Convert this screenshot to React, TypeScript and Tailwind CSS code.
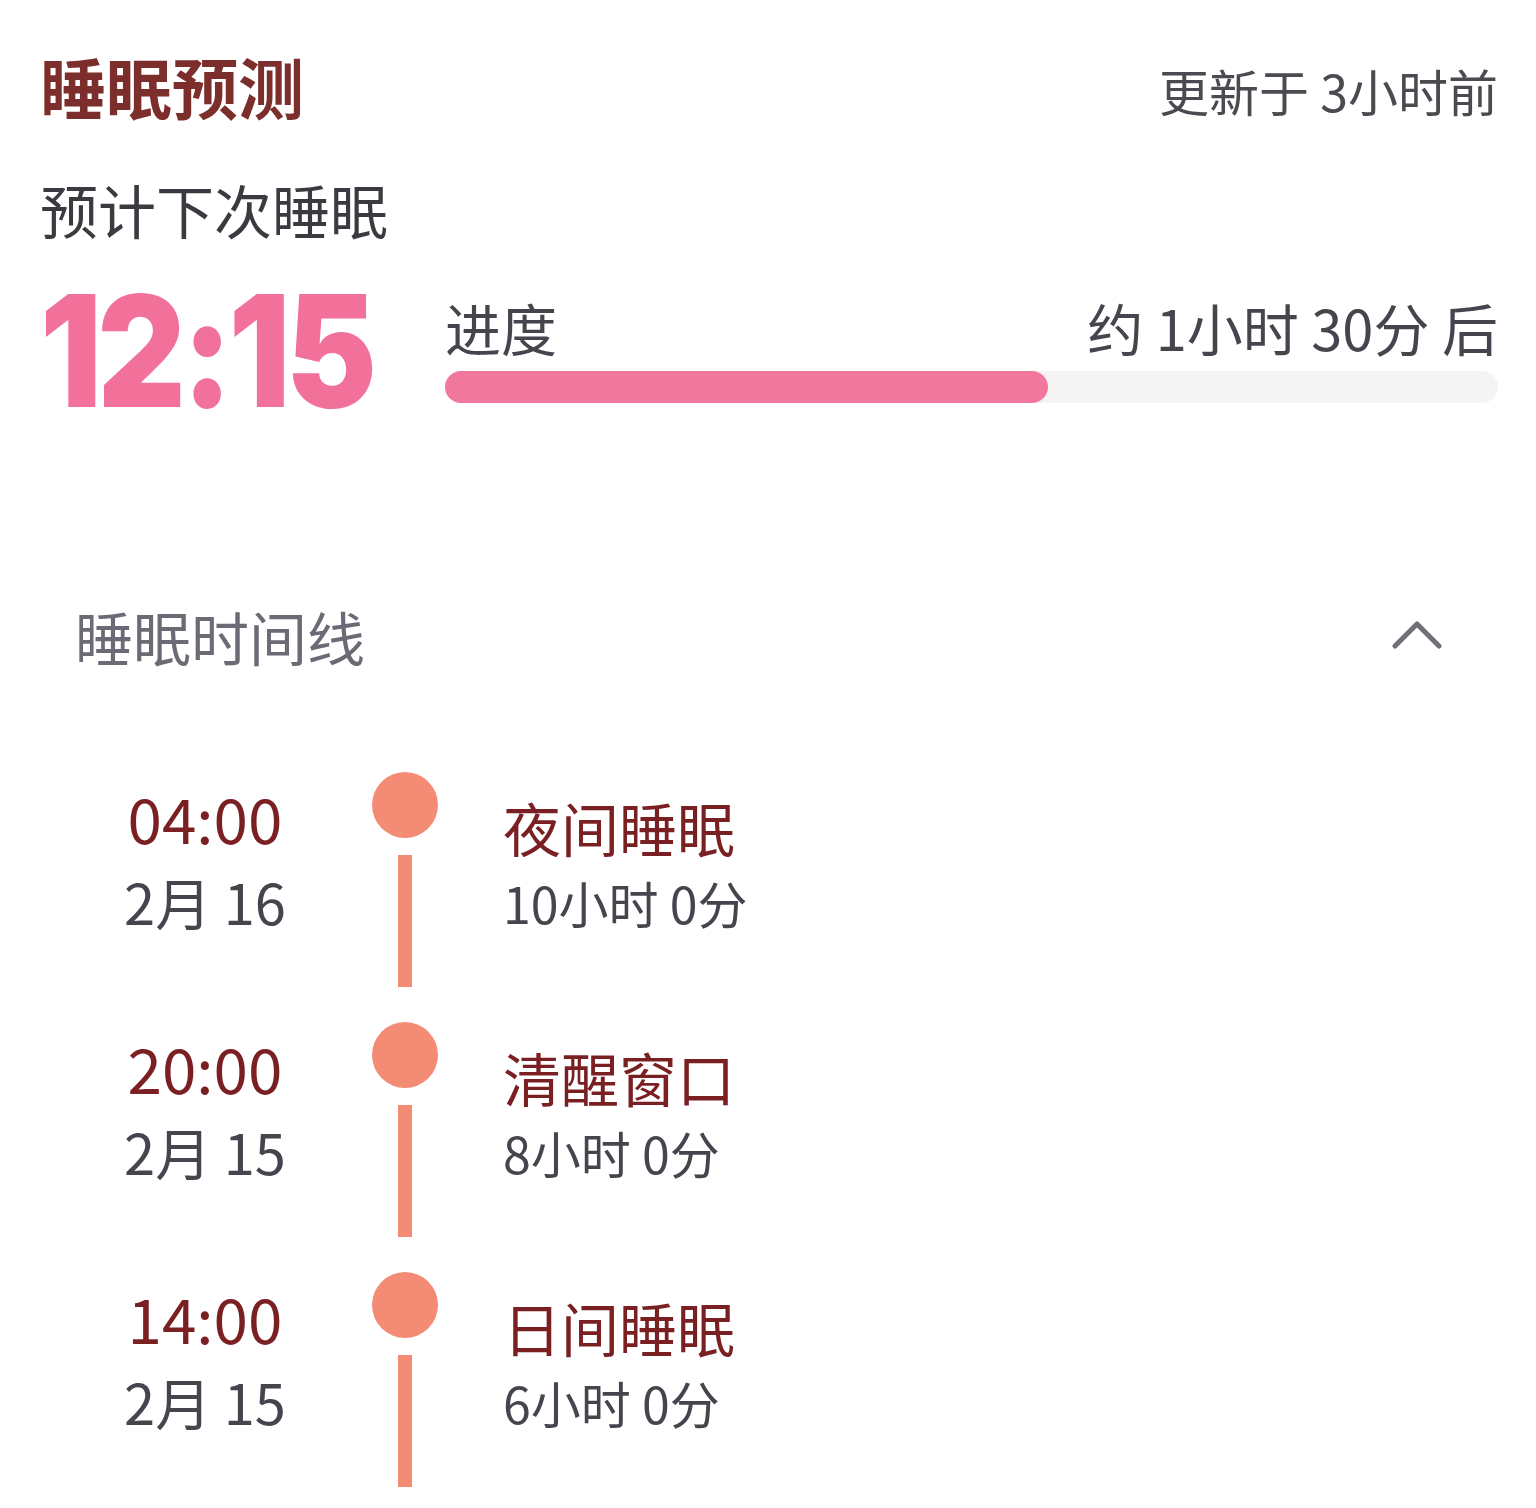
import React from "react";

type Entry = {
  time: string;
  date: string;
  title: string;
  duration: string;
};

const entries: Entry[] = [
  { time: "04:00", date: "2月 16", title: "夜间睡眠", duration: "10小时 0分" },
  { time: "20:00", date: "2月 15", title: "清醒窗口", duration: "8小时 0分" },
  { time: "14:00", date: "2月 15", title: "日间睡眠", duration: "6小时 0分" },
];

const progress = 57.3;

function TimelineRow({ entry }: { entry: Entry }) {
  return (
    <div className="flex h-[250px]">
      <div className="flex w-[260px] flex-col items-center pt-[14px]">
        <div className="text-[62px] leading-[62px] text-[#7a1f22]">{entry.time}</div>
        <div className="mt-[25px] text-[56px] leading-[56px] text-[#45454d]">{entry.date}</div>
      </div>
      <div className="ml-[37px] flex w-[66px] flex-col items-center">
        <div className="h-[66px] w-[66px] rounded-full bg-[#f48b74]" />
        <div className="mt-[17px] h-[132px] w-[14px] bg-[#f48b74]" />
      </div>
      <div className="ml-[65px] flex flex-col pt-[26px]">
        <div className="text-[58px] leading-[58px] text-[#7a1f22]">{entry.title}</div>
        <div className="mt-[21px] text-[50px] leading-[50px] text-[#45454d]">{entry.duration}</div>
      </div>
    </div>
  );
}

export default function App() {
  return (
    <div
      className="h-[1508px] w-[1536px] overflow-hidden bg-white"
      style={{ fontFamily: '"Noto Sans CJK SC", "Noto Sans", sans-serif' }}
    >
      <div className="pl-[40px] pr-[38px] pt-[52px]">
        {/* header */}
        <div className="flex items-center justify-between">
          <h1 className="text-[66px] font-bold leading-[66px] text-[#7b2e2b]">睡眠预测</h1>
          <span className="mt-[9px] text-[50px] leading-[50px] text-[#4a4a50]">更新于 3小时前</span>
        </div>

        <div className="mt-[62px] text-[58px] leading-[58px] text-[#3a3a40]">预计下次睡眠</div>

        {/* next sleep + progress */}
        <div className="mt-[38px] flex items-start">
          <div className="w-[330px] shrink-0 pt-[5px]">
            <div
              className="origin-left scale-x-[0.88] whitespace-nowrap text-[155px] font-black leading-[140px] tracking-[-0.03em] text-[#f2719a]"
              style={{ fontFamily: "Inter, sans-serif" }}
            >
              12:15
            </div>
          </div>
          <div className="ml-[75px] flex flex-1 flex-col pt-[23px]">
            <div className="flex items-end justify-between">
              <span className="text-[56px] leading-[56px] text-[#45454d]">进度</span>
              <span className="text-[56px] leading-[56px] text-[#45454d]">约 1小时 30分 后</span>
            </div>
            <div className="mt-[16px] h-[32px] w-full rounded-full bg-[#f4f4f4]">
              <div
                className="h-full rounded-full bg-[#f2779c]"
                style={{ width: `${progress}%` }}
              />
            </div>
          </div>
        </div>
      </div>

      {/* timeline */}
      <div className="mt-[186px] pl-[75px] pr-[94px]">
        <div className="flex items-center justify-between">
          <span className="text-[58px] leading-[58px] text-[#6b6b75]">睡眠时间线</span>
          <svg width="50" height="32" viewBox="0 0 50 32" fill="none" className="-mt-[4px]">
            <polyline
              points="3,28 25,6 47,28"
              stroke="#6f6f75"
              strokeWidth="5"
              strokeLinecap="round"
              strokeLinejoin="round"
            />
          </svg>
        </div>
      </div>

      <div className="mt-[107px] pl-[75px]">
        {entries.map((e) => (
          <TimelineRow key={e.time} entry={e} />
        ))}
      </div>
    </div>
  );
}
